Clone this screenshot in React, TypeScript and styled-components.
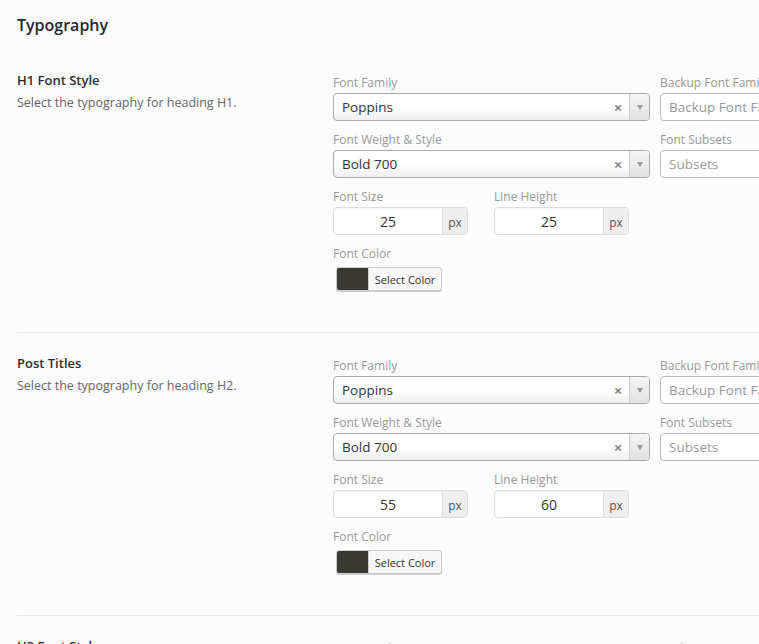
import styled, { createGlobalStyle } from 'styled-components';

const GlobalStyle = createGlobalStyle`
   html, body {
      margin: 0;
      padding: 0;
      background: #fcfcfc;
      overflow: hidden;
   }
   body {
      font-family: 'Open Sans', 'Liberation Sans', sans-serif;
      color: #444;
   }
`;

const PageStyled = styled.div`
   padding: 0 0 0 17px;
   width: 1100px;
`;

const PageTitleStyled = styled.h2`
   margin: 13px 0 13px;
   font-size: 16px;
   line-height: 24px;
   font-weight: 600;
   color: #23282d;
`;

const SectionStyled = styled.section`
   display: grid;
   grid-template-columns: 316px 1fr;
   padding: 22px 0 41px;
   border-bottom: 1px solid #e6e6e6;
`;

const SectionInfoStyled = styled.div`
   display: flex;
   flex-direction: column;
   gap: 7px;
`;

const SectionTitleStyled = styled.h3`
   margin: 0;
   font-size: 13px;
   line-height: 16px;
   font-weight: 600;
   color: #2a2e33;
`;

const SectionDescStyled = styled.p`
   margin: 0;
   font-size: 12.5px;
   line-height: 16px;
   color: #666;
`;

const FieldsStyled = styled.div`
   display: grid;
   grid-template-columns: 317px 317px;
   column-gap: 10px;
   row-gap: 11px;
   padding-top: 3px;
   align-content: start;
`;

const FieldStyled = styled.div<{ $gap?: number }>`
   display: flex;
   flex-direction: column;
   gap: ${({ $gap }) => $gap ?? 2}px;
   align-items: flex-start;
`;

const LabelStyled = styled.label`
   font-size: 12px;
   line-height: 16px;
   color: #999;
   white-space: nowrap;
`;

const SelectStyled = styled.div<{ $placeholder?: boolean }>`
   box-sizing: border-box;
   display: flex;
   align-items: center;
   width: 317px;
   height: 28px;
   border: 1px solid #aaa;
   border-radius: 4px;
   background: ${({ $placeholder }) => ($placeholder ? '#fff' : 'linear-gradient(#fff 50%, #eee)')};
   border-color: ${({ $placeholder }) => ($placeholder ? '#bbb' : '#aaa')};
   overflow: hidden;
`;

const SelectTextStyled = styled.span<{ $placeholder?: boolean }>`
   flex: 1;
   padding-left: 8px;
   font-size: 13.5px;
   color: ${({ $placeholder }) => ($placeholder ? '#999' : '#333')};
   white-space: nowrap;
`;

const ClearStyled = styled.span`
   width: 16px;
   margin-right: 3px;
   font-size: 15px;
   font-weight: 700;
   color: #888;
   text-align: center;
`;

const ArrowBoxStyled = styled.span`
   display: flex;
   align-items: center;
   justify-content: center;
   align-self: stretch;
   width: 19px;
   border-left: 1px solid #ccc;
   background: linear-gradient(#f4f4f4, #e2e2e2);
`;

const ArrowStyled = styled.span`
   width: 0;
   height: 0;
   border-left: 3px solid transparent;
   border-right: 3px solid transparent;
   border-top: 5px solid #999;
`;

const NumberRowStyled = styled.div`
   grid-column: 1 / 2;
   display: flex;
   gap: 26px;
`;

const InputGroupStyled = styled.div`
   box-sizing: border-box;
   display: flex;
   width: 135px;
   height: 28px;
   border: 1px solid #ddd;
   border-radius: 4px;
   overflow: hidden;
   background: #fff;
`;

const InputValueStyled = styled.span`
   flex: 1;
   display: flex;
   align-items: center;
   justify-content: center;
   font-size: 14px;
   color: #333;
   box-shadow: inset 0 1px 2px rgba(0, 0, 0, 0.05);
`;

const AddonStyled = styled.span`
   display: flex;
   align-items: center;
   justify-content: center;
   width: 24px;
   border-left: 1px solid #ddd;
   background: #eee;
   font-size: 12px;
   color: #555;
   padding-top: 2px;
`;

const ColorButtonStyled = styled.div`
   box-sizing: border-box;
   display: flex;
   margin-left: 3px;
   height: 24px;
   width: 106px;
   border: 1px solid #ccc;
   border-radius: 3px;
   background: #f7f7f7;
   box-shadow: 0 1px 0 #ccc;
   overflow: hidden;
`;

const SwatchStyled = styled.span<{ $color: string }>`
   width: 31px;
   background: ${({ $color }) => $color};
`;

const ColorTextStyled = styled.span`
   flex: 1;
   display: flex;
   align-items: center;
   justify-content: center;
   font-size: 11px;
   color: #333;
   border-left: 1px solid #ccc;
`;

const ColorFieldStyled = styled(FieldStyled)`
   grid-column: 1 / 2;
`;

interface ISelect {
   label: string;
   value: string;
   placeholder?: boolean;
}

const Select = ({ label, value, placeholder }: ISelect) => (
   <FieldStyled>
      <LabelStyled>{label}</LabelStyled>
      <SelectStyled $placeholder={placeholder}>
         <SelectTextStyled $placeholder={placeholder}>{value}</SelectTextStyled>
         {!placeholder && (
            <>
               <ClearStyled>×</ClearStyled>
               <ArrowBoxStyled>
                  <ArrowStyled />
               </ArrowBoxStyled>
            </>
         )}
      </SelectStyled>
   </FieldStyled>
);

const PxInput = ({ label, value }: { label: string; value: number }) => (
   <FieldStyled>
      <LabelStyled>{label}</LabelStyled>
      <InputGroupStyled>
         <InputValueStyled>{value}</InputValueStyled>
         <AddonStyled>px</AddonStyled>
      </InputGroupStyled>
   </FieldStyled>
);

interface ITypographySection {
   title: string;
   description: string;
   family: string;
   weight: string;
   size: number;
   lineHeight: number;
   color: string;
}

const sections: ITypographySection[] = [
   {
      title: 'H1 Font Style',
      description: 'Select the typography for heading H1.',
      family: 'Poppins',
      weight: 'Bold 700',
      size: 25,
      lineHeight: 25,
      color: '#3b3934',
   },
   {
      title: 'Post Titles',
      description: 'Select the typography for heading H2.',
      family: 'Poppins',
      weight: 'Bold 700',
      size: 55,
      lineHeight: 60,
      color: '#3b3934',
   },
   {
      title: 'H3 Font Style',
      description: 'Select the typography for heading H3.',
      family: 'Poppins',
      weight: 'Bold 700',
      size: 20,
      lineHeight: 24,
      color: '#3b3934',
   },
];

const TypographySection = ({ title, description, family, weight, size, lineHeight, color }: ITypographySection) => (
   <SectionStyled>
      <SectionInfoStyled>
         <SectionTitleStyled>{title}</SectionTitleStyled>
         <SectionDescStyled>{description}</SectionDescStyled>
      </SectionInfoStyled>
      <FieldsStyled>
         <Select label='Font Family' value={family} />
         <Select label='Backup Font Family' value='Backup Font Family' placeholder />
         <Select label='Font Weight & Style' value={weight} />
         <Select label='Font Subsets' value='Subsets' placeholder />
         <NumberRowStyled>
            <PxInput label='Font Size' value={size} />
            <PxInput label='Line Height' value={lineHeight} />
         </NumberRowStyled>
         <ColorFieldStyled $gap={5}>
            <LabelStyled>Font Color</LabelStyled>
            <ColorButtonStyled>
               <SwatchStyled $color={color} />
               <ColorTextStyled>Select Color</ColorTextStyled>
            </ColorButtonStyled>
         </ColorFieldStyled>
      </FieldsStyled>
   </SectionStyled>
);

const App = () => (
   <>
      <GlobalStyle />
      <PageStyled>
         <PageTitleStyled>Typography</PageTitleStyled>
         {sections.map((section) => (
            <TypographySection key={section.title} {...section} />
         ))}
      </PageStyled>
   </>
);

export default App;
